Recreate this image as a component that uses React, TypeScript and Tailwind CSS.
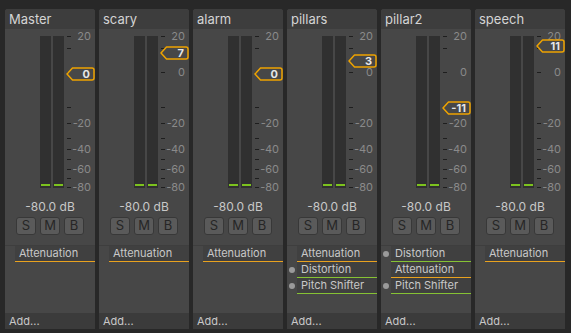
import React from "react";

type Effect = { name: string; dot?: boolean; green?: boolean };

const channels: { name: string; value: string; top: number; effects: Effect[] }[] = [
  { name: "Master", value: "0", top: 38, effects: [{ name: "Attenuation" }] },
  { name: "scary", value: "7", top: 17, effects: [{ name: "Attenuation" }] },
  { name: "alarm", value: "0", top: 38, effects: [{ name: "Attenuation" }] },
  {
    name: "pillars",
    value: "3",
    top: 25,
    effects: [
      { name: "Attenuation" },
      { name: "Distortion", dot: true, green: true },
      { name: "Pitch Shifter", dot: true, green: true },
    ],
  },
  {
    name: "pillar2",
    value: "-11",
    top: 72,
    effects: [
      { name: "Distortion", dot: true, green: true },
      { name: "Attenuation" },
      { name: "Pitch Shifter", dot: true, green: true },
    ],
  },
  { name: "speech", value: "11", top: 10, effects: [{ name: "Attenuation" }] },
];

// tick positions (px from top of the meter area)
const ticks = [7, 19, 43, 78, 94, 109, 120, 130, 140, 149, 158];
const labels = [
  { y: 7, text: "20" },
  { y: 43, text: "0" },
  { y: 94, text: "-20" },
  { y: 120, text: "-40" },
  { y: 140, text: "-60" },
  { y: 158, text: "-80" },
];

function Fader({ top, value }: { top: number; value: string }) {
  return (
    <div className="absolute left-[61px] h-[14px] w-[29px]" style={{ top }}>
      <svg width="29" height="14" viewBox="0 0 29 14" className="absolute inset-0">
        <path
          d="M1 7 L6.5 1 H26 Q28 1 28 3 V11 Q28 13 26 13 H6.5 Z"
          fill="#474747"
          stroke="#eea300"
          strokeWidth="1.5"
          strokeLinejoin="round"
        />
      </svg>
      <span className="absolute right-[5px] top-0 text-[11px] font-bold leading-[14px] text-[#e6e6e6]">
        {value}
      </span>
    </div>
  );
}

function Meter({ faderTop }: { faderTop: number }) {
  return (
    <div className="relative h-[170px]">
      <div className="absolute left-[35px] top-[7px] flex h-[152px] gap-[2px]">
        {[0, 1].map((i) => (
          <div key={i} className="relative w-[11px] bg-[#303030]">
            <div className="absolute bottom-[2px] left-[1px] right-[1px] h-[2px] bg-[#7cc21e]" />
          </div>
        ))}
      </div>
      {ticks.map((y) => (
        <div key={y} className="absolute left-[62px] h-px w-[4px] bg-[#1e1e1e]" style={{ top: y }} />
      ))}
      {labels
        // a label fully under the fader handle is not visible
        .filter((l) => !(l.y - 5 >= faderTop && l.y + 5 <= faderTop + 14))
        .map((l) => (
          <span
            key={l.text}
            className="absolute right-[4px] text-[11px] leading-[12px] text-[#8a8a8a]"
            style={{ top: l.y - 6 }}
          >
            {l.text}
          </span>
        ))}
    </div>
  );
}

function Strip({ ch }: { ch: (typeof channels)[number] }) {
  return (
    <div className="flex w-[90px] flex-col overflow-hidden rounded-t-[3px] bg-[#474747]">
      <div className="h-[20px] bg-[#3d3d3d] pl-[4px] text-[13px] leading-[20px] text-[#d4d4d4]">
        {ch.name}
      </div>
      <div className="relative">
        <Meter faderTop={ch.top} />
        <Fader top={ch.top} value={ch.value} />
      </div>
      <div className="h-[16px] text-center text-[12px] leading-[16px] text-[#c8c8c8]">-80.0 dB</div>
      <div className="mt-[2px] flex justify-center gap-[4px]">
        {["S", "M", "B"].map((b) => (
          <div
            key={b}
            className="flex h-[18px] w-[20px] items-center justify-center rounded-[3px] border border-[#383838] bg-[#5a5a5a] text-[13px] text-[#262626]"
          >
            {b}
          </div>
        ))}
      </div>
      <div className="mt-[10px] flex flex-1 flex-col border-t border-[#3e3e3e]">
        {ch.effects.map((e) => (
          <div key={e.name} className="flex h-[16px] items-stretch">
            <div className="flex w-[10px] items-center justify-center">
              {e.dot && <div className="h-[6px] w-[6px] rounded-full bg-[#9a9a9a]" />}
            </div>
            <div
              className={`flex-1 border-b bg-[#404040] pl-[4px] text-[11px] leading-[15px] text-[#c8c8c8] ${
                e.green ? "border-[#86c234]" : "border-[#e9a21f]"
              }`}
            >
              {e.name}
            </div>
          </div>
        ))}
      </div>
      <div className="h-[16px] bg-[#3b3b3b] pl-[4px] text-[11px] leading-[16px] text-[#c8c8c8]">Add...</div>
    </div>
  );
}

export default function App() {
  return (
    <div
      className="flex h-[333px] w-[571px] gap-[4px] bg-[#282828] px-[5px] pb-[4px] pt-[9px]"
      style={{ fontFamily: "Inter, 'Noto Sans', sans-serif" }}
    >
      {channels.map((ch) => (
        <Strip key={ch.name} ch={ch} />
      ))}
    </div>
  );
}
